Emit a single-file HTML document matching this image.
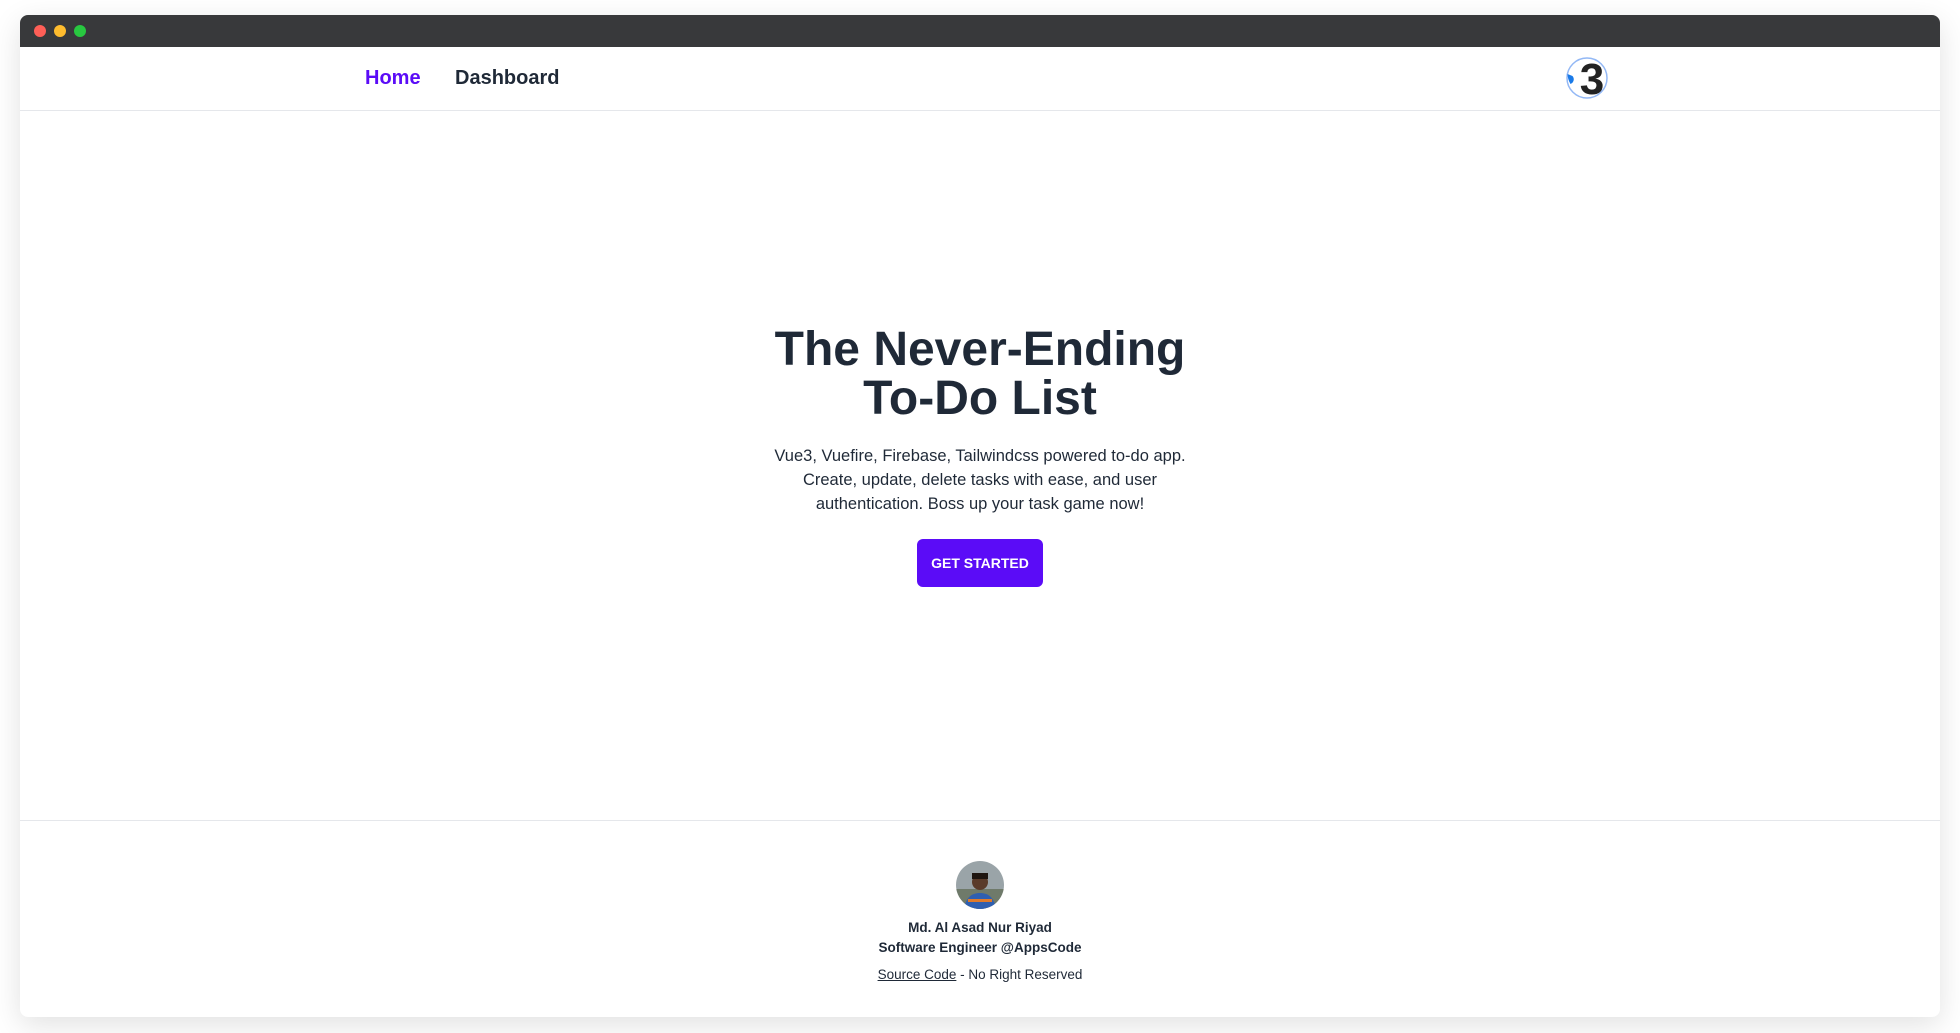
<!DOCTYPE html>
<html><head><meta charset="utf-8"><style>
*{margin:0;padding:0;box-sizing:border-box}
body{width:1960px;height:1033px;background:#fff;font-family:"Liberation Sans",sans-serif;color:#1f2937;position:relative;overflow:hidden}
.win{position:absolute;left:20px;top:15px;width:1920px;height:1002px;background:#fff;border-radius:8px;box-shadow:0 8px 30px rgba(0,0,0,.12);overflow:hidden}
.bar{height:32px;background:#38393b;position:relative}
.dot{position:absolute;top:10px;width:12px;height:12px;border-radius:50%}
.nav{position:absolute;top:32px;left:0;right:0;height:64px;border-bottom:1px solid #e5e7eb}
.nav a{position:absolute;top:20px;font-size:20px;font-weight:bold;text-decoration:none}
.c{position:absolute;left:0;right:0;text-align:center}
h1{font-size:48px;line-height:49px;font-weight:bold;color:#1f2937}
p.d{font-size:16.5px;line-height:24px;color:#1f2937}
.btn{position:absolute;left:897px;top:524px;width:126px;height:48px;background:#5b0cf7;border-radius:6px;color:#fff;font-weight:bold;font-size:14px;text-align:center;line-height:48px}
.foot{position:absolute;top:805px;left:0;right:0;bottom:0;border-top:1px solid #e5e7eb}
</style></head><body>
<div class="win">
<div class="bar"><span class="dot" style="left:14px;background:#fe5f57"></span><span class="dot" style="left:34px;background:#febc2e"></span><span class="dot" style="left:54px;background:#28c840"></span></div>
<div class="nav">
<a style="left:345px;color:#5b0cf7">Home</a>
<a style="left:435px;color:#1f2937">Dashboard</a>
<svg style="position:absolute;left:1545px;top:9px" width="44" height="44" viewBox="0 0 44 44"><circle cx="22" cy="22" r="20" fill="#fff" stroke="#93b8f5" stroke-width="1.5"/><path d="M2.5 18a20 20 0 0 0 3 10a5 5 0 0 0 2-8z" fill="#1a7ae8"/><text x="27" y="38" text-anchor="middle" font-family="Liberation Sans" font-weight="bold" font-size="44" fill="#222">3</text></svg>
</div>
<div class="c" style="top:310px"><h1>The Never-Ending<br>To-Do List</h1></div>
<div class="c" style="top:429px"><p class="d">Vue3, Vuefire, Firebase, Tailwindcss powered to-do app.<br>Create, update, delete tasks with ease, and user<br>authentication. Boss up your task game now!</p></div>
<div class="btn">GET STARTED</div>
<div class="foot">
<svg style="position:absolute;left:936px;top:40px" width="48" height="48" viewBox="0 0 48 48"><defs><clipPath id="k"><circle cx="24" cy="24" r="24"/></clipPath></defs><g clip-path="url(#k)"><rect width="48" height="48" fill="#9aa4a8"/><rect y="28" width="48" height="20" fill="#6f7a6a"/><path d="M8 48c2-12 8-16 16-16s14 4 16 16z" fill="#2f5fb0"/><rect x="12" y="38" width="24" height="3" fill="#e07a2a"/><circle cx="24" cy="21" r="8" fill="#5a3b2a"/><rect x="16" y="12" width="16" height="6" fill="#1e1510"/></g></svg>
<div class="c" style="top:97px;font-size:13.5px;font-weight:bold;line-height:20px">Md. Al Asad Nur Riyad<br>Software Engineer @AppsCode</div>
<div class="c" style="top:146px;font-size:13.5px"><span style="text-decoration:underline">Source Code</span> - No Right Reserved</div>
</div>
</div>
</body></html>
